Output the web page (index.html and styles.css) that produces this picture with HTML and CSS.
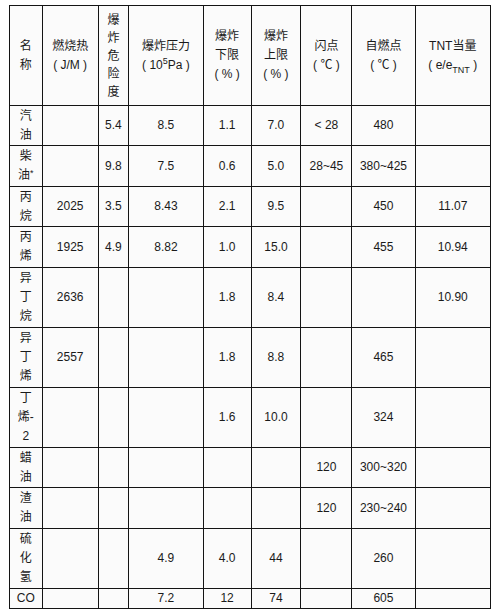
FILE: index.html
```html
<!DOCTYPE html>
<html lang="zh">
<head>
<meta charset="utf-8">
<title>可燃物性质表</title>
<link rel="stylesheet" href="styles.css">
</head>
<body>
<table class="data">
  <colgroup>
    <col class="c1"><col class="c2"><col class="c3"><col class="c4"><col class="c5">
    <col class="c6"><col class="c7"><col class="c8"><col class="c9">
  </colgroup>
  <tr class="h100">
    <td>名<br>称</td>
    <td>燃烧热<br>(&nbsp;J/M&nbsp;)</td>
    <td class="tight">爆<br>炸<br>危<br>险<br>度</td>
    <td>爆炸压力<br>(&nbsp;10<sup>5</sup>Pa&nbsp;)</td>
    <td>爆炸<br>下限<br>(&nbsp;%&nbsp;)</td>
    <td>爆炸<br>上限<br>(&nbsp;%&nbsp;)</td>
    <td>闪点<br>(&nbsp;℃&nbsp;)</td>
    <td>自燃点<br>(&nbsp;℃&nbsp;)</td>
    <td>TNT当量<br>(&nbsp;e/e<sub>TNT</sub>&nbsp;)</td>
  </tr>
  <tr class="h40">
    <td>汽<br>油</td><td></td><td>5.4</td><td>8.5</td><td>1.1</td><td>7.0</td><td>&lt; 28</td><td>480</td><td></td>
  </tr>
  <tr class="h41">
    <td>柴<br>油<span class="ast">*</span></td><td></td><td>9.8</td><td>7.5</td><td>0.6</td><td>5.0</td><td>28~45</td><td>380~425</td><td></td>
  </tr>
  <tr class="h40">
    <td>丙<br>烷</td><td>2025</td><td>3.5</td><td>8.43</td><td>2.1</td><td>9.5</td><td></td><td>450</td><td>11.07</td>
  </tr>
  <tr class="h41">
    <td>丙<br>烯</td><td>1925</td><td>4.9</td><td>8.82</td><td>1.0</td><td>15.0</td><td></td><td>455</td><td>10.94</td>
  </tr>
  <tr class="h60">
    <td>异<br>丁<br>烷</td><td>2636</td><td></td><td></td><td>1.8</td><td>8.4</td><td></td><td></td><td>10.90</td>
  </tr>
  <tr class="h60">
    <td>异<br>丁<br>烯</td><td>2557</td><td></td><td></td><td>1.8</td><td>8.8</td><td></td><td>465</td><td></td>
  </tr>
  <tr class="h60">
    <td>丁<br>烯-<br>2</td><td></td><td></td><td></td><td>1.6</td><td>10.0</td><td></td><td>324</td><td></td>
  </tr>
  <tr class="h40">
    <td>蜡<br>油</td><td></td><td></td><td></td><td></td><td></td><td>120</td><td>300~320</td><td></td>
  </tr>
  <tr class="h41">
    <td>渣<br>油</td><td></td><td></td><td></td><td></td><td></td><td>120</td><td>230~240</td><td></td>
  </tr>
  <tr class="h60">
    <td>硫<br>化<br>氢</td><td></td><td></td><td>4.9</td><td>4.0</td><td>44</td><td></td><td>260</td><td></td>
  </tr>
  <tr class="h20">
    <td>CO</td><td></td><td></td><td>7.2</td><td>12</td><td>74</td><td></td><td>605</td><td></td>
  </tr>
</table>
</body>
</html>
```

FILE: styles.css
```css
html, body {
  margin: 0;
  padding: 0;
  background: #ffffff;
}
body {
  padding: 5px 0 0 9px;
  font-family: "Liberation Sans", "Noto Sans CJK SC", Arial, sans-serif;
  font-size: 12px;
  color: #1a1a1a;
}
.data {
  border-collapse: collapse;
  table-layout: fixed;
  width: 482px;
  background: #fbfbfb;
}
.data td {
  border: 1px solid #141414;
  padding: 0;
  text-align: center;
  vertical-align: middle;
  line-height: 19px;
  overflow: hidden;
  white-space: nowrap;
}
.data td.tight {
  line-height: 18px;
}
.c1 { width: 32px; }
.c2 { width: 55px; }
.c3 { width: 30px; }
.c4 { width: 73px; }
.c5 { width: 47px; }
.c6 { width: 49px; }
.c7 { width: 50px; }
.c8 { width: 62px; }
.c9 { width: 74px; }
.h100 { height: 100px; }
.h60 { height: 60px; }
.h41 { height: 41px; }
.h40 { height: 40px; }
.h20 { height: 20px; }
sup, sub {
  font-size: 9px;
  line-height: 0;
}
sup { vertical-align: 5px; }
sub { vertical-align: -4px; }
.ast {
  font-size: 9px;
  vertical-align: 3px;
  line-height: 0;
}
```
